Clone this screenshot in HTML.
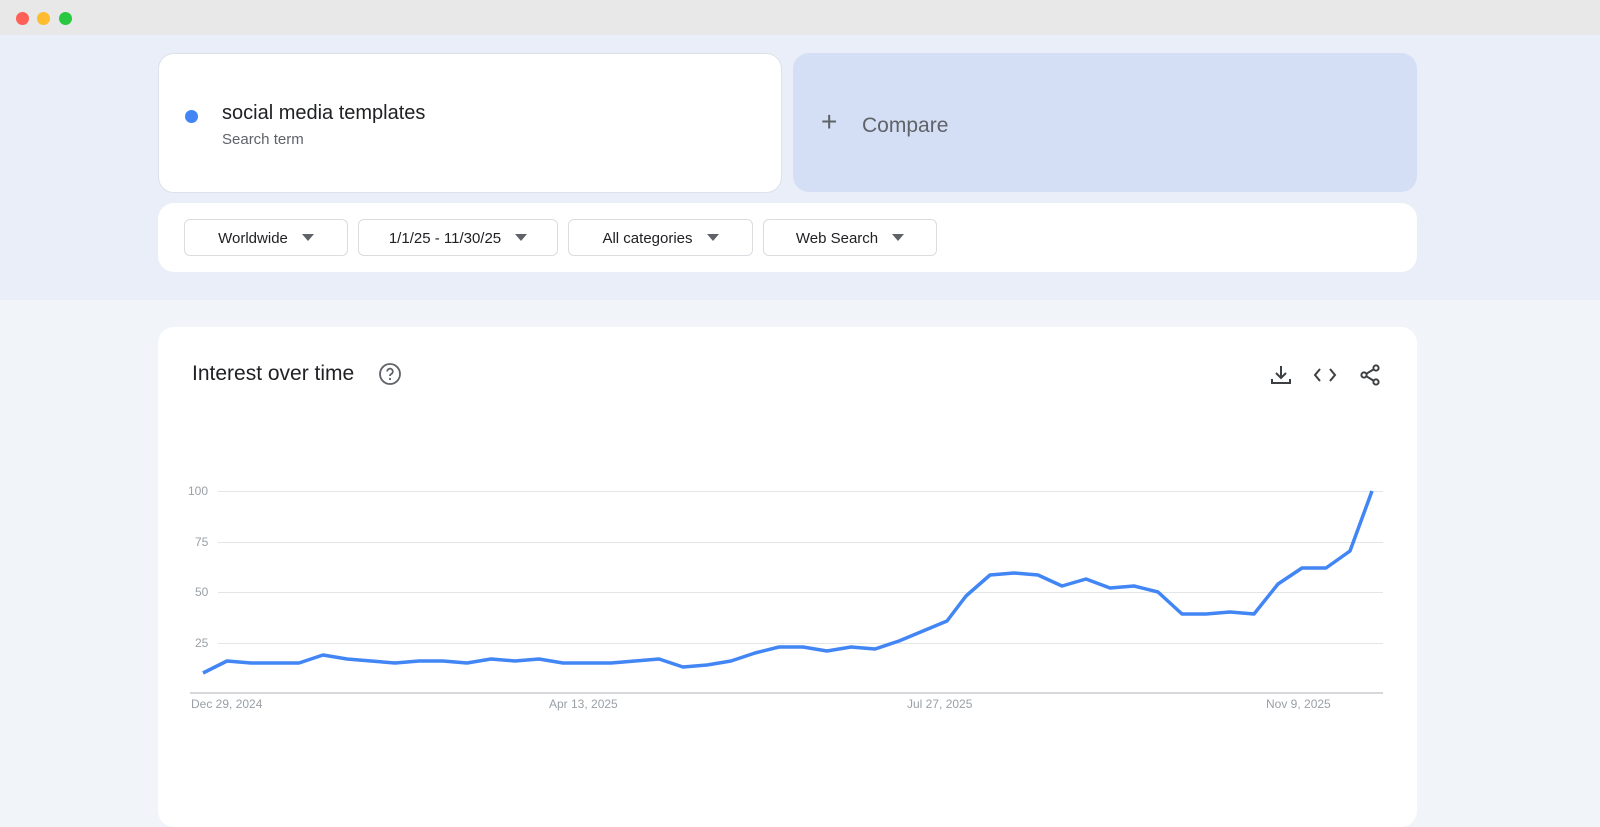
<html><head><style>
body{margin:0;width:1600px;height:790px;overflow:hidden;background:#f1f4f9;font-family:"Liberation Sans",sans-serif;position:relative}
.bar{position:absolute;left:0;top:0;width:1600px;height:35px;background:#e8e8e8}
.dot{position:absolute;top:12px;width:13px;height:13px;border-radius:50%}
.top{position:absolute;left:0;top:35px;width:1600px;height:265px;background:#e9eef8}
.card{position:absolute;background:#fff;border-radius:16px}
.pill{position:absolute;top:219px;height:37px;border:1px solid #dadce0;border-radius:6px;background:#fff;font-size:15px;color:#202124;line-height:37px;text-align:center;box-sizing:border-box}
.pill span{display:inline-block;width:0;height:0;border-left:6px solid transparent;border-right:6px solid transparent;border-top:7px solid #5f6368;margin-left:14px;vertical-align:2px}
.yl{position:absolute;left:188px;font-size:12px;color:#9aa0a6}
.xl{position:absolute;top:697px;font-size:12px;color:#9aa0a6}
</style></head><body>
<div class="bar"></div>
<div class="dot" style="left:16px;background:#fe5f57"></div>
<div class="dot" style="left:37px;background:#febc2e"></div>
<div class="dot" style="left:59px;background:#28c840"></div>
<div class="top"></div>
<div class="card" style="left:158px;top:53px;width:624px;height:140px;border:1px solid #dde1e8;box-sizing:border-box">
<div style="position:absolute;left:26px;top:56px;width:13px;height:13px;border-radius:50%;background:#4285f4"></div>
<div style="position:absolute;left:63px;top:48px;font-size:20px;color:#202124">social media templates</div>
<div style="position:absolute;left:63px;top:77px;font-size:15px;color:#5f6368">Search term</div>
</div>
<div style="position:absolute;left:793px;top:53px;width:624px;height:139px;background:#d4dff5;border-radius:16px">
<div style="position:absolute;left:28px;top:55px;font-size:28px;color:#5f6368;line-height:28px;font-weight:300">+</div>
<div style="position:absolute;left:69px;top:61px;font-size:21px;color:#5f6368">Compare</div>
</div>
<div class="card" style="left:158px;top:203px;width:1259px;height:69px"></div>
<div class="pill" style="left:184px;width:164px">Worldwide<span></span></div>
<div class="pill" style="left:358px;width:200px">1/1/25 - 11/30/25<span></span></div>
<div class="pill" style="left:568px;width:185px">All categories<span></span></div>
<div class="pill" style="left:763px;width:174px">Web Search<span></span></div>
<div class="card" style="left:158px;top:327px;width:1259px;height:500px"></div>
<div style="position:absolute;left:192px;top:362px;font-size:21px;color:#202124">Interest over time</div>
<svg style="position:absolute;left:378px;top:362px" width="24" height="24" viewBox="0 0 24 24"><circle cx="12" cy="12" r="10" fill="none" stroke="#5f6368" stroke-width="1.8"/><path d="M9.2 9.5a2.8 2.8 0 1 1 4 2.5c-.9.5-1.2 1-1.2 2" fill="none" stroke="#5f6368" stroke-width="1.8"/><circle cx="12" cy="17" r="1.1" fill="#5f6368"/></svg>
<svg style="position:absolute;left:1268px;top:362px" width="120" height="26" viewBox="0 0 120 26" fill="none" stroke="#3c4043" stroke-width="2"><path d="M13 4v12M8 11l5 5 5-5M4 17v4h18v-4"/><path d="M52 7l-5 6 5 6M62 7l5 6-5 6"/><circle cx="108" cy="6" r="2.6"/><circle cx="96" cy="13" r="2.6"/><circle cx="108" cy="20" r="2.6"/><path d="M98.5 11.7l7-4.3M98.5 14.3l7 4.3"/></svg>
<svg style="position:absolute;left:0;top:0" width="1600" height="790">
<g stroke="#e3e5e8" stroke-width="1"><line x1="218" y1="491.5" x2="1383" y2="491.5"/><line x1="218" y1="542.5" x2="1383" y2="542.5"/><line x1="218" y1="592.5" x2="1383" y2="592.5"/><line x1="218" y1="643.5" x2="1383" y2="643.5"/></g>
<line x1="190" y1="693" x2="1383" y2="693" stroke="#bdc1c6" stroke-width="1.2"/>
<polyline fill="none" stroke="#4285f4" stroke-width="3.5" stroke-linejoin="round" points="203,673 227,661 251,663 275,663 299,663 323,655 347,659 371,661 395,663 419,661 443,661 467,663 491,659 515,661 539,659 563,663 587,663 611,663 635,661 659,659 683,667 707,665 731,661 755,653 779,647 803,647 827,651 851,647 875,649 899,641 923,631 947,621 966,596 990,575 1014,573 1038,575 1062,586 1086,579 1110,588 1134,586 1158,592 1182,614 1206,614 1230,612 1254,614 1278,584 1302,568 1326,568 1350,551 1372,491"/>
</svg>
<div class="yl" style="top:484px">100</div><div class="yl" style="top:535px;left:195px">75</div><div class="yl" style="top:585px;left:195px">50</div><div class="yl" style="top:636px;left:195px">25</div>
<div class="xl" style="left:191px">Dec 29, 2024</div><div class="xl" style="left:549px">Apr 13, 2025</div><div class="xl" style="left:907px">Jul 27, 2025</div><div class="xl" style="left:1266px">Nov 9, 2025</div>
</body></html>
